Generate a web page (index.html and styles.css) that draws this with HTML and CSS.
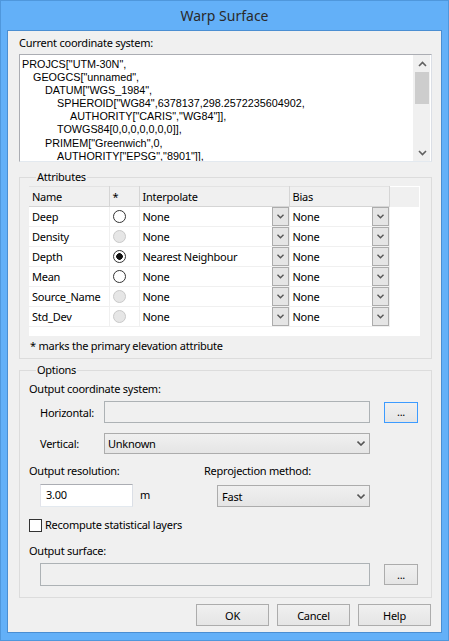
FILE: index.html
```html
<!DOCTYPE html>
<html lang="en">
  <head>
    <meta charset="utf-8">
    <title>Warp Surface</title>
    <link rel="stylesheet" href="styles.css">
  </head>
  <body>
    <div class="window">
      <div class="titlebar">Warp Surface</div>
      <div class="client">
        <div class="label top-label">Current coordinate system:</div>
        <div class="wkt">
          <div class="wkt-text">
            <div class="i0">PROJCS["UTM-30N",</div>
            <div class="i1">GEOGCS["unnamed",</div>
            <div class="i2">DATUM["WGS_1984",</div>
            <div class="i3">SPHEROID["WG84",6378137,298.2572235604902,</div>
            <div class="i4">AUTHORITY["CARIS","WG84"]],</div>
            <div class="i3">TOWGS84[0,0,0,0,0,0,0]],</div>
            <div class="i2">PRIMEM["Greenwich",0,</div>
            <div class="i3">AUTHORITY["EPSG","8901"]],</div>
          </div>
          <div class="vscroll">
            <span class="sb-arrow">
              <svg width="9" height="6" viewBox="0 0 9 6"><path d="M1 5 L4.5 1.5 L8 5" fill="none" stroke="#606060" stroke-width="1.6"/></svg>
            </span>
            <span class="sb-thumb"></span>
            <span class="sb-track"></span>
            <span class="sb-arrow">
              <svg width="9" height="6" viewBox="0 0 9 6"><path d="M1 1 L4.5 4.5 L8 1" fill="none" stroke="#606060" stroke-width="1.6"/></svg>
            </span>
          </div>
        </div>

        <fieldset class="group attrs">
          <legend>Attributes</legend>
          <div class="grid-wrap">
            <table class="grid">
              <thead>
                <tr>
                  <th class="c-name">Name</th>
                  <th class="c-star">*</th>
                  <th class="c-interp">Interpolate</th>
                  <th class="c-bias">Bias</th>
                  <th class="c-rest"></th>
                </tr>
              </thead>
              <tbody>
                <tr>
                  <td>Deep</td>
                  <td class="radio-cell"><span class="radio"></span></td>
                  <td><div class="cell-combo"><span>None</span><span class="cell-arrow"></span></div></td>
                  <td><div class="cell-combo"><span>None</span><span class="cell-arrow"></span></div></td>
                  <td class="rest"></td>
                </tr>
                <tr>
                  <td>Density</td>
                  <td class="radio-cell"><span class="radio off"></span></td>
                  <td><div class="cell-combo"><span>None</span><span class="cell-arrow"></span></div></td>
                  <td><div class="cell-combo"><span>None</span><span class="cell-arrow"></span></div></td>
                  <td class="rest"></td>
                </tr>
                <tr>
                  <td>Depth</td>
                  <td class="radio-cell"><span class="radio on"></span></td>
                  <td><div class="cell-combo"><span>Nearest Neighbour</span><span class="cell-arrow"></span></div></td>
                  <td><div class="cell-combo"><span>None</span><span class="cell-arrow"></span></div></td>
                  <td class="rest"></td>
                </tr>
                <tr>
                  <td>Mean</td>
                  <td class="radio-cell"><span class="radio"></span></td>
                  <td><div class="cell-combo"><span>None</span><span class="cell-arrow"></span></div></td>
                  <td><div class="cell-combo"><span>None</span><span class="cell-arrow"></span></div></td>
                  <td class="rest"></td>
                </tr>
                <tr>
                  <td>Source_Name</td>
                  <td class="radio-cell"><span class="radio off"></span></td>
                  <td><div class="cell-combo"><span>None</span><span class="cell-arrow"></span></div></td>
                  <td><div class="cell-combo"><span>None</span><span class="cell-arrow"></span></div></td>
                  <td class="rest"></td>
                </tr>
                <tr>
                  <td>Std_Dev</td>
                  <td class="radio-cell"><span class="radio off"></span></td>
                  <td><div class="cell-combo"><span>None</span><span class="cell-arrow"></span></div></td>
                  <td><div class="cell-combo"><span>None</span><span class="cell-arrow"></span></div></td>
                  <td class="rest"></td>
                </tr>
              </tbody>
            </table>
          </div>
          <p class="note">* marks the primary elevation attribute</p>
        </fieldset>

        <fieldset class="group options">
          <legend>Options</legend>
          <div class="label">Output coordinate system:</div>
          <div class="row horiz">
            <span class="row-label">Horizontal:</span>
            <span class="textbox disabled wide"></span>
            <button class="btn small default">...</button>
          </div>
          <div class="row vert">
            <span class="row-label">Vertical:</span>
            <span class="combo wide">Unknown<span class="combo-arrow"></span></span>
          </div>
          <div class="two-col">
            <div class="col-left">
              <div class="label">Output resolution:</div>
              <div class="res-row">
                <span class="textbox res">3.00</span>
                <span class="unit">m</span>
              </div>
            </div>
            <div class="col-right">
              <div class="label">Reprojection method:</div>
              <span class="combo method">Fast<span class="combo-arrow"></span></span>
            </div>
          </div>
          <label class="check-row"><span class="checkbox"></span>Recompute statistical layers</label>
          <div class="label">Output surface:</div>
          <div class="row surface">
            <span class="textbox disabled surface-box"></span>
            <button class="btn small">...</button>
          </div>
        </fieldset>

        <div class="buttons">
          <button class="btn">OK</button>
          <button class="btn">Cancel</button>
          <button class="btn">Help</button>
        </div>
      </div>
    </div>
  </body>
</html>
```

FILE: styles.css
```css
*{
    margin: 0;
    padding: 0;
    box-sizing: border-box;
}
body{
    background: #63b0f8;
    font-family: "Noto Sans", "Open Sans", sans-serif;
    font-size: 11px;
    letter-spacing: -0.25px;
    color: #000;
}
.window{
    width: 449px;
    height: 641px;
    background: #63b0f8;
    border: 1px solid #4f97dc;
    padding: 0 6px 7px 6px;
    display: flex;
    flex-direction: column;
}
.titlebar{
    height: 29px;
    text-align: center;
    font-size: 14px;
    letter-spacing: 0;
    line-height: 30px;
    color: #2a2a2a;
}
.client{
    flex: 1;
    background: #f0f0f0;
    border: 1px solid #4a8ed2;
    padding: 4px 9px 0 11px;
}
.label{
    line-height: 16px;
    white-space: nowrap;
}

/* coordinate system text box */
.wkt{
    margin-top: 3px;
    height: 108px;
    width: 413px;
    background: #fff;
    border: 1px solid #abadb3;
    border-bottom-color: #e3e9ef;
    border-right-color: #dbdfe6;
    display: flex;
    overflow: hidden;
}
.wkt-text{
    flex: 1;
    padding: 3px 0 0 2px;
    font-family: "Liberation Sans", Arial, sans-serif;
    font-size: 10.8px;
    letter-spacing: 0;
    line-height: 13.1px;
    white-space: nowrap;
    overflow: hidden;
}
.i1{ padding-left: 11px; }
.i2{ padding-left: 23px; }
.i3{ padding-left: 35px; }
.i4{ padding-left: 48px; }
.vscroll{
    width: 17px;
    margin-right: 1px;
    background: #f0f0f0;
    border-left: 1px solid #f0f0f0;
    display: flex;
    flex-direction: column;
}
.sb-arrow{
    height: 17px;
    display: flex;
    align-items: center;
    justify-content: center;
}
.sb-thumb{
    height: 32px;
    margin: 0 1px;
    background: #cdcdcd;
}
.sb-track{
    flex: 1;
}

/* group boxes */
.group{
    border: 1px solid #dcdcdc;
    margin: 0;
    min-width: 0;
    width: 413px;
}
.group legend{
    margin-left: 7px;
    padding: 0 1px;
    line-height: 16px;
}
.attrs{
    margin-top: 7px;
    padding: 1px 11px 4px 9px;
}
.grid-wrap{
    height: 150px;
    background: #fff;
}
.grid{
    border-collapse: collapse;
    table-layout: fixed;
    width: 390px;
}
.grid th{
    height: 20px;
    background: #f0f0f0;
    font-weight: normal;
    text-align: left;
    padding: 0 0 0 3px;
    border: 1px solid #d5d5d5;
    border-top-color: #e3e3e3;
    border-left: none;
}
.grid th.c-name{ width: 80px; }
.grid th.c-star{ width: 30px; }
.grid th.c-interp{ width: 150px; }
.grid th.c-bias{ width: 100px; }
.grid th.c-rest{ border: none; border-bottom: 1px solid #f0f0f0; }
.grid td{
    height: 20px;
    padding: 0 0 0 3px;
    border-right: 1px solid #f0f0f0;
    border-bottom: 1px solid #f0f0f0;
    white-space: nowrap;
    overflow: hidden;
}
.grid td.rest{ border: none; }
.grid td.radio-cell{ padding-left: 2px; }
.radio{
    display: block;
    width: 13px;
    height: 13px;
    border-radius: 50%;
    border: 1px solid #333;
    background: #fff;
    margin-left: 1px;
}
.radio.off{
    border-color: #c9c9c9;
    background: #e6e6e6;
}
.radio.on{
    background: radial-gradient(circle, #111 0 3px, #fff 3.6px);
}
.cell-combo{
    display: flex;
    justify-content: space-between;
    align-items: center;
    height: 19px;
}
.cell-arrow{
    width: 17px;
    height: 19px;
    border: 1px solid #acacac;
    background: #e5e5e5 url("data:image/svg+xml;utf8,<svg xmlns='http://www.w3.org/2000/svg' width='7' height='5'><path d='M0.5 0.8 L3.5 3.8 L6.5 0.8' fill='none' stroke='%23555' stroke-width='1.4'/></svg>") no-repeat center;
}
.note{
    margin-top: 2px;
    padding-left: 1px;
    line-height: 16px;
}

/* options */
.options{
    margin-top: 3px;
    padding: 3px 10px 11px 9px;
}
.row{
    display: flex;
    align-items: center;
}
.row-label{
    width: 64px;
    margin-left: 11px;
}
.horiz{
    margin-top: 4px;
}
.textbox{
    display: block;
    height: 22px;
    background: #fff;
    border: 1px solid #abadb3;
    border-color: #abadb3 #dbdfe6 #e3e9ef #e2e3ea;
    padding: 0 0 0 4px;
    line-height: 20px;
}
.textbox.disabled{
    background: #f0f0f0;
    border: 1px solid #adb2b5;
}
.wide{
    width: 266px;
}
.btn{
    width: 73px;
    height: 22px;
    font-family: inherit;
    font-size: 11px;
    letter-spacing: -0.25px;
    color: #000;
    border: 1px solid #acacac;
    background: linear-gradient(#f0f0f0, #e5e5e5);
}
.btn.small{
    width: 34px;
    height: 21px;
    margin-left: 14px;
    line-height: 12px;
}
.btn.default{
    border-color: #3c9bff;
}
.vert{
    margin-top: 10px;
}
.combo{
    position: relative;
    display: flex;
    align-items: center;
    height: 21px;
    padding-left: 3px;
    border: 1px solid #acacac;
    background: linear-gradient(#f0f0f0, #e5e5e5);
}
.combo-arrow{
    margin-left: auto;
    width: 17px;
    height: 19px;
    background: url("data:image/svg+xml;utf8,<svg xmlns='http://www.w3.org/2000/svg' width='8' height='5'><path d='M0.5 0.6 L4 4 L7.5 0.6' fill='none' stroke='%23555' stroke-width='1.6'/></svg>") no-repeat center;
}
.two-col{
    display: flex;
    margin-top: 9px;
}
.col-left{
    width: 175px;
}
.res-row{
    display: flex;
    align-items: center;
    margin-top: 5px;
    padding-left: 11px;
}
.textbox.res{
    width: 93px;
    height: 23px;
    padding-left: 5px;
}
.unit{
    margin-left: 7px;
    margin-top: -2px;
}
.col-right .combo.method{
    width: 153px;
    height: 22px;
    margin-top: 6px;
    margin-left: 13px;
    padding-left: 4px;
}
.check-row{
    display: flex;
    align-items: center;
    margin-top: 10px;
    line-height: 16px;
}
.checkbox{
    width: 13px;
    height: 13px;
    border: 1px solid #333;
    background: #fff;
    margin-right: 3px;
}
.check-row + .label{
    margin-top: 10px;
}
.surface{
    margin-top: 4px;
    padding-left: 11px;
}
.surface-box{
    width: 330px;
    height: 23px;
}

.buttons{
    display: flex;
    justify-content: flex-end;
    gap: 8px;
    margin-top: 6px;
    padding-right: 1px;
}
```
